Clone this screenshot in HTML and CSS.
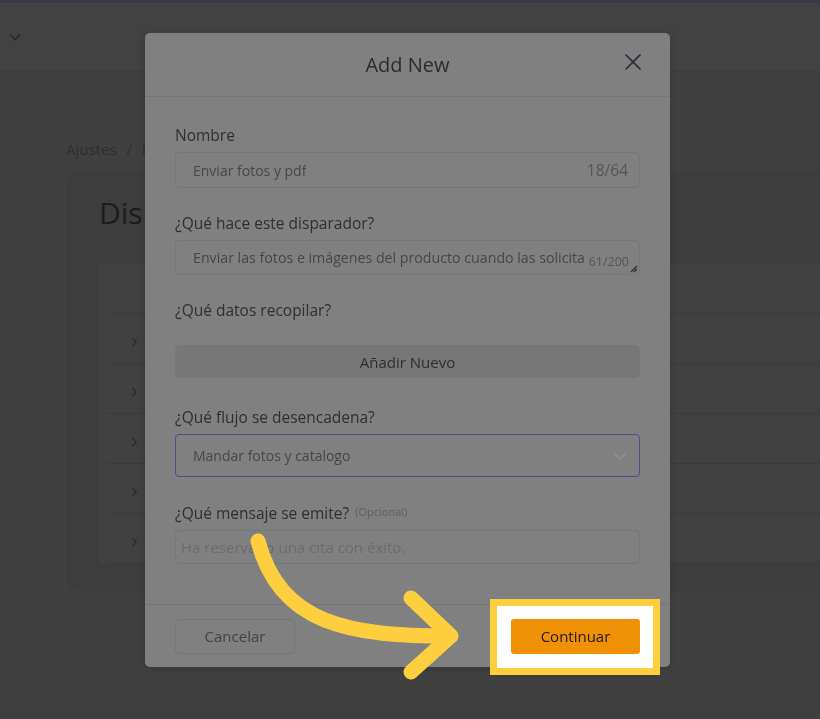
FILE: index.html
```html
<!DOCTYPE html>
<html lang="es">
<head>
    <meta charset="UTF-8">
    <meta name="viewport" content="width=device-width, initial-scale=1.0">
    <title>Disparadores - Add New</title>
    <link rel="stylesheet" href="styles.css">
</head>
<body>

<!-- page behind the modal -->
<div class="topbar">
    <span class="topbar-caret">
        <svg width="12" height="8" viewBox="0 0 12 8"><path d="M1 1.5 L6 6.5 L11 1.5" fill="none" stroke="#262626" stroke-width="1.3"/></svg>
    </span>
</div>

<div class="page">
    <div class="breadcrumb">Ajustes <span class="sep">/</span> Disparadores</div>
    <div class="card">
        <h1 class="card-title">Disparadores</h1>
        <div class="table">
            <div class="table-head"></div>
            <div class="table-row"><span class="row-caret">&#x203A;</span></div>
            <div class="table-row"><span class="row-caret">&#x203A;</span></div>
            <div class="table-row"><span class="row-caret">&#x203A;</span></div>
            <div class="table-row"><span class="row-caret">&#x203A;</span></div>
            <div class="table-row"><span class="row-caret">&#x203A;</span></div>
        </div>
    </div>
</div>

<!-- Add New modal -->
<div class="backdrop">
    <div class="modal">
        <div class="modal-header">
            <h2>Add New</h2>
            <button class="close-btn" aria-label="Cerrar">
                <svg width="18" height="18" viewBox="0 0 18 18"><path d="M1.5 1.5 L16.5 16.5 M16.5 1.5 L1.5 16.5" stroke="#2a2a36" stroke-width="1.6" fill="none"/></svg>
            </button>
        </div>

        <div class="modal-body">
            <div class="field">
                <label>Nombre</label>
                <div class="input">
                    <span class="value">Enviar fotos y pdf</span>
                    <span class="count">18/64</span>
                </div>
            </div>

            <div class="field">
                <label>¿Qué hace este disparador?</label>
                <div class="input textarea">
                    <span class="value">Enviar las fotos e imágenes del producto cuando las solicita</span>
                    <span class="count small">61/200</span>
                    <svg class="grip" width="8" height="8" viewBox="0 0 8 8"><path d="M7 1 L1 7 M7 4 L4 7" stroke="#2a2a2a" stroke-width="1.2"/></svg>
                </div>
            </div>

            <div class="field field-data">
                <label>¿Qué datos recopilar?</label>
                <button class="add-btn">Añadir Nuevo</button>
            </div>

            <div class="field">
                <label>¿Qué flujo se desencadena?</label>
                <div class="input select">
                    <span class="value">Mandar fotos y catalogo</span>
                    <svg width="14" height="8" viewBox="0 0 14 8"><path d="M1 1 L7 7 L13 1" fill="none" stroke="#939393" stroke-width="1.2"/></svg>
                </div>
            </div>

            <div class="field">
                <label>¿Qué mensaje se emite? <span class="optional">(Opcional)</span></label>
                <div class="input plain">
                    <span class="placeholder">Ha reservado una cita con éxito.</span>
                </div>
            </div>
        </div>

        <div class="modal-footer">
            <button class="cancel-btn">Cancelar</button>
            <span class="highlight">
                <button class="continue-btn">Continuar</button>
            </span>
        </div>
    </div>

    <!-- tutorial arrow -->
    <svg class="arrow" width="820" height="719" viewBox="0 0 820 719">
        <path d="M258 541 C280 625 350 636 450 636" fill="none" stroke="#fdcf3f" stroke-width="15" stroke-linecap="round"/>
        <path d="M411 598 L451 636 L411 672" fill="none" stroke="#fdcf3f" stroke-width="15" stroke-linecap="round" stroke-linejoin="round"/>
    </svg>
</div>

</body>
</html>
```

FILE: styles.css
```css
body {
    margin: 0;
    font-family: 'Open Sans', 'Noto Sans', sans-serif;
    background-color: #404040;
    overflow: hidden;
    height: 719px;
}

/* page behind */

.topbar {
    height: 67px;
    border-top: 3px solid #393944;
    border-bottom: 1px solid #3a3a3a;
    background-color: #424242;
    display: flex;
    align-items: center;
    padding-left: 9px;
}

.topbar-caret {
    display: flex;
    margin-top: 1px;
}

.page {
    padding: 68px 0 0 66px;
}

.breadcrumb {
    font-size: 15px;
    color: #2e2e2e;
    line-height: 20px;
}

.breadcrumb .sep {
    margin: 0 6px;
}

.card {
    margin-top: 12px;
    width: 800px;
    height: 420px;
    background-color: #3d3d3d;
    border-radius: 14px;
    padding: 20px 0 0 33px;
    box-sizing: border-box;
}

.card-title {
    margin: 0;
    font-size: 30px;
    font-weight: 400;
    color: #1c1c1c;
    line-height: 44px;
}

.table {
    margin-top: 29px;
    background-color: #414141;
    width: 740px;
}

.table-head {
    height: 49px;
    border-bottom: 1px solid #3a3a3a;
    margin-left: 8px;
}

.table-row {
    height: 49px;
    border-bottom: 1px solid #3a3a3a;
    margin-left: 8px;
    display: flex;
    align-items: center;
    padding-left: 24px;
}

.row-caret {
    font-size: 22px;
    color: #2c2c2c;
    line-height: 1;
}

/* modal */

.backdrop {
    position: fixed;
    inset: 0;
    display: flex;
    justify-content: center;
    align-items: flex-start;
    padding: 33px 5px 0 0;
}

.modal {
    width: 525px;
    background-color: #808080;
    border-radius: 5px;
    box-shadow: 0 2px 10px rgba(0, 0, 0, 0.15);
}

.modal-header {
    height: 63px;
    border-bottom: 1px solid #767676;
    display: flex;
    align-items: center;
    justify-content: center;
    position: relative;
}

.modal-header h2 {
    margin: 0;
    font-size: 20px;
    font-weight: 400;
    color: #2a2a30;
}

.close-btn {
    position: absolute;
    right: 28px;
    top: 20px;
    background: none;
    border: none;
    padding: 0;
    display: flex;
    cursor: pointer;
}

.modal-body {
    padding: 28px 30px 15px;
}

.field {
    margin-bottom: 25px;
}

.field label {
    display: block;
    font-size: 15.5px;
    line-height: 20px;
    color: #2f2f2f;
    margin-bottom: 7px;
}

.field .optional {
    font-size: 11px;
    color: #5e5e5e;
    vertical-align: 3px;
    margin-left: 2px;
}

.field-data label {
    margin-bottom: 25px;
}

.field-data {
    margin-bottom: 29px;
}

.input {
    height: 36px;
    border: 1px solid #777;
    border-radius: 4px;
    box-sizing: border-box;
    display: flex;
    align-items: center;
    justify-content: space-between;
    padding: 0 11px 0 17px;
    position: relative;
}

.input .value {
    font-size: 14px;
    color: #464646;
    white-space: nowrap;
    overflow: hidden;
}

.input .count {
    font-size: 15.5px;
    color: #555;
}

.textarea {
    height: 35px;
    padding-right: 10px;
}

.textarea .value {
    width: 394px;
    font-size: 14.2px;
    flex-shrink: 0;
}

.textarea .count.small {
    font-size: 12.5px;
    margin-top: 8px;
}

.grip {
    position: absolute;
    right: 1px;
    bottom: 1px;
}

.select {
    height: 43px;
    border-color: #5c4588;
    padding-right: 12px;
}

.plain {
    height: 34px;
    padding-left: 5px;
}

.placeholder {
    font-size: 15px;
    color: #6b6b6b;
}

.add-btn {
    width: 100%;
    height: 33px;
    border: none;
    border-radius: 5px;
    background-color: #777;
    font-family: inherit;
    font-size: 15px;
    color: #2e2e2e;
    cursor: pointer;
}

.modal-footer {
    height: 62px;
    border-top: 1px solid #767676;
    display: flex;
    align-items: center;
    justify-content: space-between;
    padding: 0 30px;
}

.cancel-btn {
    width: 120px;
    height: 35px;
    border: 1px solid #767676;
    border-radius: 4px;
    background: none;
    font-family: inherit;
    font-size: 15px;
    color: #434343;
    cursor: pointer;
}

.highlight {
    display: flex;
    margin: -20px -20px -21px -21px;
    padding: 13px 13px 14px 14px;
    background-color: #fff;
    border: 7px solid #fdcf3f;
}

.continue-btn {
    width: 129px;
    height: 35px;
    border: none;
    border-radius: 3px;
    background-color: #f09105;
    font-family: inherit;
    font-size: 15px;
    font-weight: 500;
    color: #1a1a1a;
    cursor: pointer;
}

.arrow {
    position: absolute;
    left: 0;
    top: 0;
    pointer-events: none;
}
```
